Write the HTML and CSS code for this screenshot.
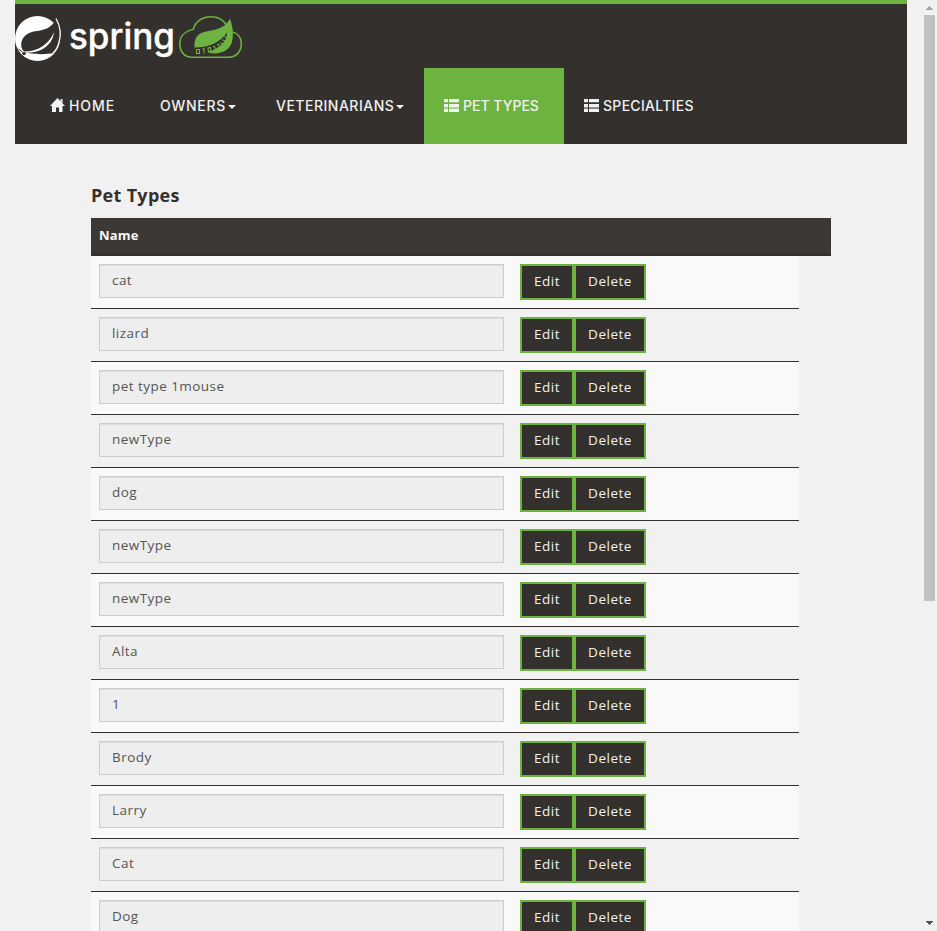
FILE: index.html
```html
<!DOCTYPE html>
<html lang="en">
<head>
<meta charset="utf-8">
<title>Pet Types</title>
<link rel="stylesheet" href="styles.css">
</head>
<body>
<div class="page">
<header class="navbar">
  <a class="brand">
    <svg width="230" height="56" viewBox="15 8 230 56">
      <circle cx="37.500" cy="38.500" r="22.500" fill="#fff"/>
      <path d="M56 18.500C54.500 22.500 52.500 24.500 50 26.500C44.500 31 36 30.500 30.500 32.500C23.500 35 20.800 40.500 21.300 46C21.500 48.500 22.500 50.500 24.500 51.600C31 54.800 45 54.500 54 53.300C62 44 62 32 56 18.500Z" fill="#34302d"/>
      <path d="M56 18.500C60.300 26 61.300 35 58.800 43C57.500 48 55.500 51 52.500 53.500" fill="none" stroke="#fff" stroke-width="1.300"/>
      <path d="M24 51.600C38 51.300 48.500 45 54 32.300C52.500 44.500 42 53.500 25.500 52.600Z" fill="#fff"/>
      <path d="M18.500 49L22.500 52" fill="none" stroke="#34302d" stroke-width="1"/>
      <circle cx="24" cy="53.500" r="1.800" fill="#34302d"/>
      <text class="brand-name" x="69" y="49" textLength="106" lengthAdjust="spacingAndGlyphs">spring</text>
      <path d="M192 57.200C184 57.200 179.800 51 179.800 43.500C179.800 36 185.500 31 193.300 29.300C195.500 21 203 16.700 211 16.700C220 16.700 227 22 229 31.500C237 32 241.300 37 241.300 44C241.300 51.500 236 57.200 229 57.200Z" fill="none" stroke="#6db33f" stroke-width="1.600"/>
      <path d="M230 18.500C232.500 26 234 34 232 42C229.500 50 223 53 215 53.500L196 52C193.500 47 193.500 38 199.500 34C207 29 223 32.500 230 18.500Z" fill="#6db33f"/>
      <path d="M195 47.500C208 47.500 220 43 227 32.500C227.500 40 221 47 212 50.500L206 54H194Z" fill="#34302d"/>
      <g fill="none" stroke="#6db33f" stroke-width="1.100">
        <path d="M196.500 49.500h3v4h-3zM202.500 49l1.500-.5v5M208 48l2.500-.5l.5 3.500l-2.500 .5zM213 47l1.300-.7l1.200 3M217 45l1.300-1l1.500 3M220.500 42.500l2 2M222.500 39.500l2.500 2M224.500 36.500l2 1"/>
      </g>
    </svg>
  </a>
  <nav class="nav">
    <a class="item home"><svg class="icon house" width="15" height="14" viewBox="0 0 15 14"><path d="M7.500 0L15 8H12.500V14H9V9.500H6V14H2V8H0Z"/><path d="M10.500 1h2v4h-2z"/></svg><span class="t-home">HOME</span></a>
    <a class="item owners"><span class="t-own">OWNERS</span><i class="caret"></i></a>
    <a class="item vets"><span class="t-vet">VETERINARIANS</span><i class="caret"></i></a>
    <a class="item active"><svg class="icon list" width="15" height="13" viewBox="0 0 15 13"><path d="M0 0h4v3.300H0zM5 0h10v3.300H5zM0 5h4v3.200H0zM5 5h10v3.200H5zM0 10h4v3H0zM5 10h10v3H5z"/><path d="M0 8h4v2H0zM5 8h10v2H5z" opacity=".4"/></svg><span class="t-pet">PET TYPES</span></a>
    <a class="item"><svg class="icon list" width="15" height="13" viewBox="0 0 15 13"><path d="M0 0h4v3.300H0zM5 0h10v3.300H5zM0 5h4v3.200H0zM5 5h10v3.200H5zM0 10h4v3H0zM5 10h10v3H5z"/><path d="M0 8h4v2H0zM5 8h10v2H5z" opacity=".4"/></svg><span class="t-spec">SPECIALTIES</span></a>
  </nav>
</header>
<main class="content">
  <h2 class="title">Pet Types</h2>
  <div class="thead">Name</div>
  <div class="rows">
    <div class="row"><div class="field">cat</div><button class="btn edit">Edit</button><button class="btn delete">Delete</button></div>
    <div class="row"><div class="field">lizard</div><button class="btn edit">Edit</button><button class="btn delete">Delete</button></div>
    <div class="row"><div class="field">pet type 1mouse</div><button class="btn edit">Edit</button><button class="btn delete">Delete</button></div>
    <div class="row"><div class="field">newType</div><button class="btn edit">Edit</button><button class="btn delete">Delete</button></div>
    <div class="row"><div class="field">dog</div><button class="btn edit">Edit</button><button class="btn delete">Delete</button></div>
    <div class="row"><div class="field">newType</div><button class="btn edit">Edit</button><button class="btn delete">Delete</button></div>
    <div class="row"><div class="field">newType</div><button class="btn edit">Edit</button><button class="btn delete">Delete</button></div>
    <div class="row"><div class="field">Alta</div><button class="btn edit">Edit</button><button class="btn delete">Delete</button></div>
    <div class="row"><div class="field">1</div><button class="btn edit">Edit</button><button class="btn delete">Delete</button></div>
    <div class="row"><div class="field">Brody</div><button class="btn edit">Edit</button><button class="btn delete">Delete</button></div>
    <div class="row"><div class="field">Larry</div><button class="btn edit">Edit</button><button class="btn delete">Delete</button></div>
    <div class="row"><div class="field">Cat</div><button class="btn edit">Edit</button><button class="btn delete">Delete</button></div>
    <div class="row"><div class="field">Dog</div><button class="btn edit">Edit</button><button class="btn delete">Delete</button></div>
  </div>
</main>
</div>
<div class="scrollbar">
  <svg width="7" height="4" viewBox="0 0 7 4" shape-rendering="crispEdges"><path d="M3 0h1v1h1v1h1v1h1v1H0V3h1V2h1V1h1z" fill="#a3a3a3"/></svg>
  <div class="thumb"></div>
  <svg class="down" width="7" height="4" viewBox="0 0 7 4" shape-rendering="crispEdges"><path d="M0 0h7v1H6v1H5v1H4v1H3V3H2V2H1V1H0z" fill="#505050"/></svg>
</div>
</body>
</html>
```
FILE: styles.css
```css
* { box-sizing: border-box; }
body {
  margin: 0;
  display: flex;
  height: 931px;
  overflow: hidden;
  background: #f1f1f1;
  font-family: "Open Sans", "Noto Sans", sans-serif;
  font-size: 13px;
  color: #34302d;
}
.page { width: 922px; padding: 0 15px; height: 931px; overflow: hidden; }
.navbar { height: 144px; border-top: 4px solid #6db33f; background: #34302d; }
.brand { display: block; height: 64px; padding-top: 4px; }
.brand svg { display: block; }
.brand-name { font: 500 36px Inter, sans-serif; fill: #fff; stroke: #fff; stroke-width: .4px; }
.nav { display: flex; height: 76px; padding-left: 15px; }
.item {
  display: flex;
  align-items: center;
  padding-left: 20px;
  color: #f1f1f1;
  font: 500 14px/20px Inter, sans-serif;
  white-space: nowrap;
}
.icon { fill: #f1f1f1; margin-right: 4px; flex: none; }
.house { margin-top: -3px; }
.list { margin-top: -1px; }
.home { width: 110px; }
.owners { width: 116px; }
.vets { width: 168px; }
.active { width: 140px; background: #6db33f; }
.t-home { letter-spacing: .9px; }
.t-own { letter-spacing: .7px; }
.t-vet { letter-spacing: .5px; }
.t-spec { letter-spacing: .3px; }
.caret {
  margin: 2px 0 0 2px;
  border-left: 4px solid transparent;
  border-right: 4px solid transparent;
  border-top: 4px solid #f1f1f1;
}
.content { padding: 40px 76px 0; }
.title { margin: 0; height: 34px; font: 700 18px/23px "Open Sans", sans-serif; letter-spacing: .3px; }
.thead {
  height: 38px;
  padding: 8px;
  background: #3c3834;
  border-bottom: 3px solid #34302d;
  color: #f9f9f9;
  font-weight: 700;
  line-height: 19px;
  letter-spacing: .2px;
}
.rows { width: 708px; }
.row {
  display: flex;
  height: 53px;
  padding: 8px;
  border-bottom: 1px solid #34302d;
}
.row:nth-child(odd) { background: #f9f9f9; }
.field {
  width: 405px;
  height: 34px;
  margin-right: 16px;
  padding: 0 12px;
  border: 1px solid #ccc;
  box-shadow: inset 0 1px 1px rgba(0, 0, 0, .075);
  background: #eee;
  color: #555;
  font-size: 13.5px;
  line-height: 31px;
  letter-spacing: .45px;
}
.btn {
  height: 36px;
  padding: 0 0 2px;
  border: 2px solid #6db33f;
  background: #34302d;
  color: #f1f1f1;
  font: 13.5px/30px "Open Sans", sans-serif;
  letter-spacing: .5px;
}
.edit { width: 54px; }
.delete { width: 72px; }
.scrollbar {
  display: flex;
  flex-direction: column;
  align-items: center;
  width: 15px;
  padding: 6px 0;
  background: #f1f1f1;
}
.thumb { width: 11px; height: 586px; margin-top: 5px; background: #c1c1c1; }
.down { margin-top: auto; }
```
